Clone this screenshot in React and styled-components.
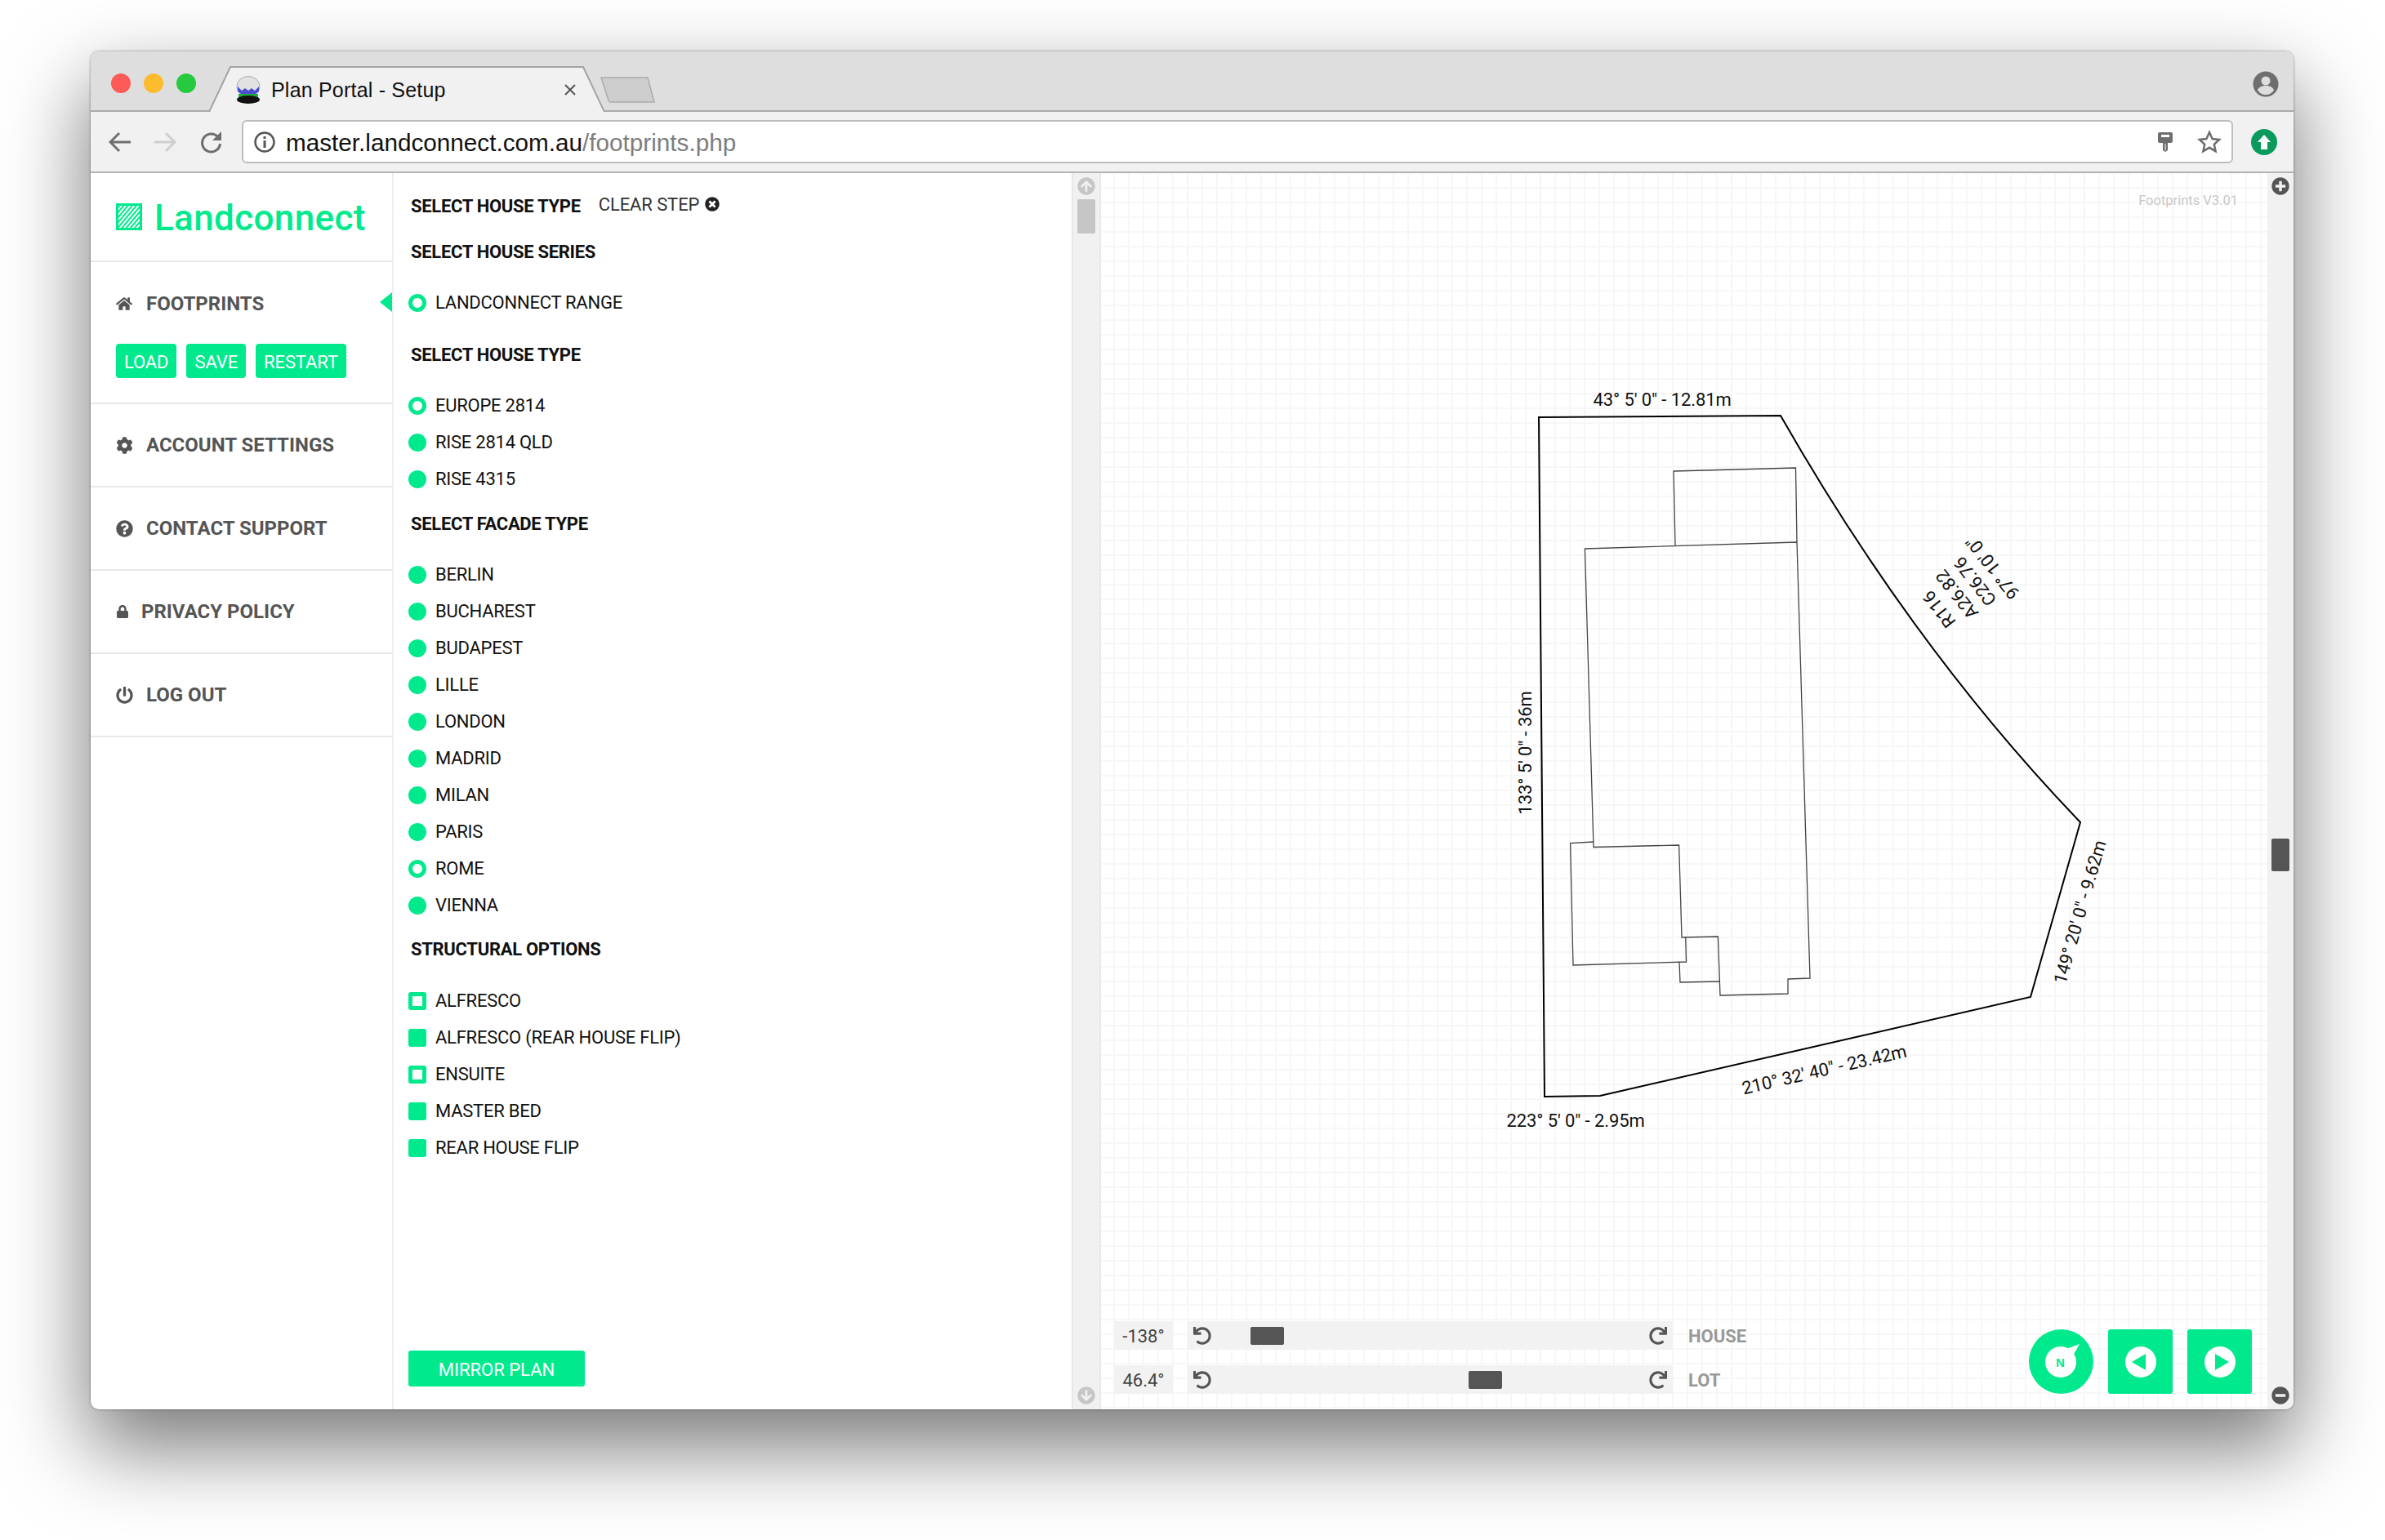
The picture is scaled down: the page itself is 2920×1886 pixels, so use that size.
import React from "react"
import styled, { createGlobalStyle } from "styled-components"
import {
  FaHome, FaCog, FaQuestionCircle, FaLock, FaPowerOff, FaTimesCircle,
  FaPlusCircle, FaMinusCircle, FaArrowCircleUp, FaArrowCircleDown, FaUndo, FaRedo,
} from "react-icons/fa"

const GREEN = "#00ea8d"
const NARROW = '"Liberation Sans Narrow", Roboto, sans-serif'

const Global = createGlobalStyle`
  html, body { margin: 0; padding: 0; background: #fff; }
  * { box-sizing: border-box; }
`

const Page = styled.div`
  width: 2920px;
  height: 1886px;
  padding: 63px 112px 160px 111px;
  background: #fff;
  overflow: hidden;
`

const Window = styled.div`
  width: 100%;
  height: 100%;
  display: flex;
  flex-direction: column;
  border-radius: 10px;
  background: #fff;
  overflow: hidden;
  box-shadow: 0 44px 100px 4px rgba(0, 0, 0, 0.52), 0 0 3px rgba(0, 0, 0, 0.45);
`

const TabStrip = styled.div`
  height: 74px;
  flex: none;
  display: flex;
  align-items: flex-end;
  padding: 0 18px 0 25px;
  background: #dedede;
  border-bottom: 2px solid #ababab;
`

const Lights = styled.div`
  display: flex;
  gap: 16px;
  align-self: flex-start;
  margin-top: 27px;
  margin-right: 16px;
`

const Light = styled.span`
  width: 24px;
  height: 24px;
  border-radius: 50%;
  background: ${p => p.$color};
`

const Tab = styled.div`
  position: relative;
  width: 484px;
  height: 56px;
  margin-bottom: -2px;
  display: flex;
  align-items: center;
  padding: 2px 34px 0 32px;
  font: 25px "Liberation Sans", Arial, sans-serif;
  letter-spacing: 0.2px;
  color: #111;

  > svg.shape { position: absolute; left: 0; top: 0; }
  > * { position: relative; }
`

const TabTitle = styled.span`
  margin-left: 12px;
  flex: 1;
  white-space: nowrap;
`

const NewTab = styled.svg`
  margin: 0 0 9px -6px;
  flex: none;
`

const Avatar = styled.svg`
  margin-left: auto;
  align-self: flex-start;
  margin-top: 24px;
`

const Toolbar = styled.div`
  height: 75px;
  flex: none;
  display: flex;
  align-items: center;
  padding: 0 20px 0 22px;
  background: #f1f1f1;
  border-bottom: 2px solid #b4b4b4;
`

const NavIcon = styled.svg`
  flex: none;
  margin-right: ${p => p.$gap}px;
`

const UrlBox = styled.div`
  flex: 1;
  height: 53px;
  display: flex;
  align-items: center;
  padding: 0 12px 0 13px;
  background: #fff;
  border: 2px solid #bdbdbd;
  border-radius: 6px;
  font: 29.7px "Liberation Sans", Arial, sans-serif;
  color: #111;
`

const UrlPath = styled.span`
  color: #7d7d7d;
`

const UrlText = styled.span`
  margin-left: 13px;
  padding-top: 2px;
  flex: 1;
  white-space: nowrap;
`

const UpdateBadge = styled.span`
  width: 32px;
  height: 32px;
  flex: none;
  margin-left: 22px;
  border-radius: 50%;
  background: #0a9a5c;
  display: flex;
  align-items: center;
  justify-content: center;
`

const Body = styled.div`
  flex: 1;
  min-height: 0;
  display: flex;
`

const Sidebar = styled.aside`
  width: 371px;
  flex: none;
  border-right: 2px solid #eeeeee;
  display: flex;
  flex-direction: column;
`

const Logo = styled.div`
  height: 109px;
  flex: none;
  padding: 37px 0 0 31px;
  display: flex;
  gap: 15px;
  border-bottom: 2px solid #e8e8e8;
  font: 500 44px/36px Roboto, sans-serif;
  letter-spacing: 0.35px;
  color: ${GREEN};
`

const NavBlock = styled.div`
  position: relative;
  height: ${p => p.$h}px;
  flex: none;
  padding: ${p => p.$top}px 0 0 31px;
  border-bottom: 2px solid #e8e8e8;
`

const NavLink = styled.div`
  height: 30px;
  display: flex;
  align-items: center;
  gap: ${p => p.$gap}px;
  font: bold 24px ${NARROW};
  color: #555;
  white-space: nowrap;
`

const ActiveMark = styled.span`
  position: absolute;
  right: 0;
  top: 37px;
  width: 0;
  height: 0;
  border-style: solid;
  border-width: 12px 15px 12px 0;
  border-color: transparent ${GREEN} transparent transparent;
`

const ActionRow = styled.div`
  display: flex;
  gap: 12px;
  margin-top: 34px;
`

const ActionButton = styled.div`
  height: 42px;
  padding: 2px 10px 0;
  display: flex;
  align-items: center;
  background: ${GREEN};
  border-radius: 4px;
  color: #fff;
  font: 22px ${NARROW};
  letter-spacing: -0.1px;
`

const Steps = styled.section`
  width: 830px;
  flex: none;
  display: flex;
  flex-direction: column;
  padding: 22px 0 28px 18px;
`

const StepHeader = styled.div`
  height: 36px;
  display: flex;
  align-items: center;
  flex: none;
`

const Heading = styled.h3`
  height: 36px;
  margin: ${p => p.$top}px 0 ${p => p.$bottom}px 3px;
  flex: none;
  display: flex;
  align-items: center;
  font: bold 22px ${NARROW};
  letter-spacing: -0.3px;
  color: #111;
`

const ClearStep = styled.span`
  margin: 0 7px 3px 22px;
  font: 22px ${NARROW};
  letter-spacing: -0.1px;
  color: #333;
`

const ClearIcon = styled(FaTimesCircle)`
  margin-bottom: 4px;
  color: #222;
  font-size: 18px;
`

const Option = styled.div`
  height: 45px;
  flex: none;
  display: flex;
  align-items: center;
  gap: 11px;
  font: 22px ${NARROW};
  letter-spacing: -0.25px;
  color: #111;
`

const Marker = styled.span`
  width: 22px;
  height: 22px;
  flex: none;
  border-radius: ${p => (p.$square ? "3px" : "50%")};
  background: ${p => (p.$open ? "#fff" : GREEN)};
  border: ${p => (p.$open ? `5px solid ${GREEN}` : "none")};
`

const MirrorButton = styled.div`
  width: 216px;
  height: 44px;
  padding-top: 2px;
  margin-top: auto;
  flex: none;
  display: flex;
  align-items: center;
  justify-content: center;
  background: ${GREEN};
  border-radius: 3px;
  color: #fff;
  font: 22px ${NARROW};
`

const Scrollbar = styled.div`
  position: relative;
  width: ${p => p.$w}px;
  flex: none;
  display: flex;
  flex-direction: column;
  align-items: center;
  padding: 5px 0 6px;
  background: #f1f1f1;
  border-left: ${p => (p.$bordered ? "2px solid #e8e8e8" : "none")};
  border-right: ${p => (p.$bordered ? "2px solid #e8e8e8" : "none")};
  font-size: 22px;
  color: ${p => p.$color};
`

const ScrollThumb = styled.span`
  position: absolute;
  left: 50%;
  top: ${p => p.$top}px;
  width: 22px;
  height: ${p => p.$h}px;
  margin-left: -11px;
  border-radius: 2px;
  background: ${p => p.$color};
`

const ScrollEnd = styled.span`
  margin-top: auto;
  display: flex;
`

const Canvas = styled.main`
  position: relative;
  flex: 1;
  min-width: 0;
  display: flex;
  flex-direction: column;
  justify-content: flex-end;
  background-color: #fff;
  background-image:
    linear-gradient(to right, #f7f7f7 2px, transparent 2px),
    linear-gradient(to bottom, #f7f7f7 2px, transparent 2px);
  background-size: 18px 18px;
  background-position: 15px 17px;
`

const Plan = styled.svg`
  position: absolute;
  left: 0;
  top: 0;

  text {
    font: 22px ${NARROW};
    letter-spacing: -0.1px;
    fill: #111;
    text-anchor: middle;
    dominant-baseline: central;
  }
`

const Version = styled.span`
  position: absolute;
  right: 36px;
  top: 24px;
  font: 16.5px ${NARROW};
  color: #c8c8c8;
`

const ControlBar = styled.div`
  position: relative;
  display: flex;
  align-items: flex-end;
  padding: 0 19px 19px 16px;
`

const Sliders = styled.div`
  display: flex;
  flex-direction: column;
  gap: 19px;
`

const SliderRow = styled.div`
  display: flex;
  align-items: center;
`

const Value = styled.span`
  width: 72px;
  height: 35px;
  padding-top: 2px;
  display: flex;
  align-items: center;
  justify-content: center;
  background: #f2f2f2;
  font: 22px ${NARROW};
  color: #444;
`

const Track = styled.div`
  position: relative;
  width: 594px;
  height: 35px;
  margin: 0 19px 0 18px;
  padding: 0 7px;
  display: flex;
  align-items: center;
  justify-content: space-between;
  background: #f2f2f2;
  color: #555;
  font-size: 22px;
`

const Thumb = styled.span`
  position: absolute;
  top: 7px;
  width: 41px;
  height: 22px;
  border-radius: 2px;
  background: #555;
`

const SliderLabel = styled.span`
  padding-top: 2px;
  font: bold 22px ${NARROW};
  color: #999;
`

const Controls = styled.div`
  margin-left: auto;
  display: flex;
  gap: 18px;
`

const RoundButton = styled.div`
  width: 79px;
  height: 79px;
  background: ${GREEN};
  border-radius: ${p => (p.$round ? "50%" : "3px")};
  display: flex;
  align-items: center;
  justify-content: center;
`

const Favicon = () => (
  <svg width="32" height="34" viewBox="0 0 32 34">
    <ellipse cx="16" cy="13" rx="14" ry="12.500" fill="#e2e2e2" stroke="#a8a8a8" />
    <path d="M3 13l5 5 4-3 4 3 4-3 4 3 5-5v6l-4 3H7l-4-3z" fill="#4a4fd0" />
    <path d="M4 22h24v5H4z" fill="#1fae3a" />
    <ellipse cx="16" cy="29" rx="14" ry="5" fill="#111" />
  </svg>
)

const ModeTriangle = ({ flip }) => (
  <svg width="38" height="38" viewBox="0 0 38 38">
    <circle cx="19" cy="19" r="19" fill="#fff" />
    <path d={flip ? "M25 9v20L8 19z" : "M13 9v20l17-10z"} fill={GREEN} />
  </svg>
)

const options = (names, open = []) =>
  names.map(name => ({ name, open: open.includes(name) }))

const houseTypes = options(["EUROPE 2814", "RISE 2814 QLD", "RISE 4315"], ["EUROPE 2814"])
const facades = options(
  ["BERLIN", "BUCHAREST", "BUDAPEST", "LILLE", "LONDON", "MADRID", "MILAN", "PARIS", "ROME", "VIENNA"],
  ["ROME"],
)
const structural = options(
  ["ALFRESCO", "ALFRESCO (REAR HOUSE FLIP)", "ENSUITE", "MASTER BED", "REAR HOUSE FLIP"],
  ["ALFRESCO", "ENSUITE"],
)

const OptionList = ({ items, square }) =>
  items.map(item => (
    <Option key={item.name}>
      <Marker $open={item.open} $square={square} />
      {item.name}
    </Option>
  ))

const Slider = ({ value, label, thumb }) => (
  <SliderRow>
    <Value>{value}</Value>
    <Track>
      <FaUndo />
      <Thumb style={{ left: thumb }} />
      <FaRedo />
    </Track>
    <SliderLabel>{label}</SliderLabel>
  </SliderRow>
)

export default function App() {
  return (
    <Page>
      <Global />
      <Window>
        <TabStrip>
          <Lights>
            <Light $color="#fc5b57" />
            <Light $color="#fdbc2e" />
            <Light $color="#27c93f" />
          </Lights>
          <Tab>
            <svg className="shape" width="484" height="56" viewBox="0 0 484 56">
              <path d="M0 56L26 1H458L484 56" fill="#f1f1f1" stroke="#a3a3a3" strokeWidth="2" />
            </svg>
            <Favicon />
            <TabTitle>Plan Portal - Setup</TabTitle>
            <svg width="16" height="16" viewBox="0 0 16 16">
              <path d="M2 2l12 12M14 2L2 14" stroke="#555" strokeWidth="2" />
            </svg>
          </Tab>
          <NewTab width="68" height="32" viewBox="0 0 68 32">
            <path d="M2 1h48l9 0 8 30H14a3 3 0 0 1-3-2L2 1z" fill="#cdcdcd" stroke="#ababab" strokeWidth="1.5" />
          </NewTab>
          <Avatar width="32" height="32" viewBox="0 0 32 32">
            <circle cx="16" cy="16" r="15.5" fill="#6e6e6e" />
            <circle cx="16" cy="12" r="5.5" fill="#dedede" />
            <path d="M6 23c2-4 6-5 10-5s8 1 10 5c-2 4-6 6-10 6s-8-2-10-6z" fill="#dedede" />
          </Avatar>
        </TabStrip>
        <Toolbar>
          <NavIcon $gap={29} width="27" height="26" viewBox="0 0 27 26">
            <path d="M27 13H3M13 2L2 13l11 11" fill="none" stroke="#6e6e6e" strokeWidth="3" />
          </NavIcon>
          <NavIcon $gap={29} width="27" height="26" viewBox="0 0 27 26">
            <path d="M0 13h24M14 2l11 11-11 11" fill="none" stroke="#cfcfcf" strokeWidth="3" />
          </NavIcon>
          <NavIcon $gap={24} width="27" height="30" viewBox="0 0 27 30">
            <path d="M22 9a11 11 0 1 0 2.5 8" fill="none" stroke="#6e6e6e" strokeWidth="3" />
            <path d="M26 2v11H15z" fill="#6e6e6e" />
          </NavIcon>
          <UrlBox>
            <svg width="26" height="26" viewBox="0 0 26 26">
              <circle cx="13" cy="13" r="11.5" fill="none" stroke="#555" strokeWidth="2.5" />
              <path d="M11.5 6h3v3h-3zM11.5 11h3v9h-3z" fill="#555" />
            </svg>
            <UrlText>
              master.landconnect.com.au<UrlPath>/footprints.php</UrlPath>
            </UrlText>
            <NavIcon $gap={30} width="18" height="24" viewBox="0 0 18 24">
              <path d="M2 0h14a2 2 0 0 1 2 2v9a2 2 0 0 1-2 2h-4v9l-3 2-3-2v-9H2a2 2 0 0 1-2-2V2a2 2 0 0 1 2-2z" fill="#6e6e6e" />
              <path d="M4 3h10v3H4z" fill="#fff" />
              <path d="M8.5 14h1v8h-1z" fill="#fff" />
            </NavIcon>
            <svg width="30" height="29" viewBox="0 0 30 29">
              <path d="M15 3l3.6 8 8.6.9-6.4 5.8 1.8 8.5L15 21.8 7.4 26.200l1.800-8.500-6.400-5.800 8.600-.9z" fill="none" stroke="#6e6e6e" strokeWidth="2.500" />
            </svg>
          </UrlBox>
          <UpdateBadge>
            <svg width="16" height="18" viewBox="0 0 16 18">
              <path d="M8 0l8 9h-4v9H4V9H0z" fill="#fff" />
            </svg>
          </UpdateBadge>
        </Toolbar>
        <Body>
          <Sidebar>
            <Logo>
              <svg width="32" height="33" viewBox="0 0 32 33">
                <defs>
                  <pattern id="hatch" width="4" height="4" patternUnits="userSpaceOnUse" patternTransform="rotate(40)">
                    <rect width="4" height="4" fill="#fff" />
                    <rect width="2" height="4" fill={GREEN} />
                  </pattern>
                </defs>
                <rect x="1.500" y="1.500" width="29" height="30" fill="url(#hatch)" stroke={GREEN} strokeWidth="3" />
              </svg>
              Landconnect
            </Logo>
            <NavBlock $h={174} $top={36}>
              <NavLink $gap={17}><FaHome size={20} />FOOTPRINTS</NavLink>
              <ActiveMark />
              <ActionRow>
                <ActionButton>LOAD</ActionButton>
                <ActionButton>SAVE</ActionButton>
                <ActionButton>RESTART</ActionButton>
              </ActionRow>
            </NavBlock>
            <NavBlock $h={102} $top={35}>
              <NavLink $gap={16}><FaCog size={21} />ACCOUNT SETTINGS</NavLink>
            </NavBlock>
            <NavBlock $h={102} $top={35}>
              <NavLink $gap={16}><FaQuestionCircle size={21} />CONTACT SUPPORT</NavLink>
            </NavBlock>
            <NavBlock $h={102} $top={35}>
              <NavLink $gap={15}><FaLock size={16} />PRIVACY POLICY</NavLink>
            </NavBlock>
            <NavBlock $h={102} $top={35}>
              <NavLink $gap={16}><FaPowerOff size={21} />LOG OUT</NavLink>
            </NavBlock>
          </Sidebar>
          <Steps>
            <StepHeader>
              <Heading $top={0} $bottom={0} as="span">SELECT HOUSE TYPE</Heading>
              <ClearStep>CLEAR STEP</ClearStep>
              <ClearIcon />
            </StepHeader>
            <Heading $top={20} $bottom={22}>SELECT HOUSE SERIES</Heading>
            <OptionList items={options(["LANDCONNECT RANGE"], ["LANDCONNECT RANGE"])} />
            <Heading $top={23} $bottom={22}>SELECT HOUSE TYPE</Heading>
            <OptionList items={houseTypes} />
            <Heading $top={14} $bottom={22}>SELECT FACADE TYPE</Heading>
            <OptionList items={facades} />
            <Heading $top={13} $bottom={23}>STRUCTURAL OPTIONS</Heading>
            <OptionList items={structural} square />
            <MirrorButton>MIRROR PLAN</MirrorButton>
          </Steps>
          <Scrollbar $w={36} $bordered $color="#c6c6c6">
            <FaArrowCircleUp />
            <ScrollThumb $top={32} $h={42} $color="#c6c6c6" />
            <ScrollEnd><FaArrowCircleDown /></ScrollEnd>
          </Scrollbar>
          <Canvas>
            <Plan width="1428" height="1514" viewBox="1348 212 1428 1514">
              <g fill="none" stroke="#444" strokeWidth="1.300">
                <path d="M2051 668L2049 577L2198.500 573L2200 664" />
                <path d="M1940.400 672L2200 664L2216 1198L2189 1199L2189 1217L2106 1219L2103.400 1147L2059 1148L2055.600 1035L1951 1037.500Z" />
                <path d="M1951 1031L1922.600 1032.500L1926 1182L2064.500 1178L2063.700 1147" />
                <path d="M2056 1178L2057 1203L2105.600 1202" />
              </g>
              <path
                d="M1884 511L2180 509Q2342.500 794 2547 1007L2486 1221L1959 1342L1891 1343Z"
                fill="none"
                stroke="#000"
                strokeWidth="2"
              />
              <text x="2035" y="489">43° 5' 0" - 12.81m</text>
              <text transform="translate(1867 922) rotate(-90)">133° 5' 0" - 36m</text>
              <text transform="translate(2374 746) rotate(232)">R116</text>
              <text transform="translate(2396 728) rotate(232)">A26.82</text>
              <text transform="translate(2418 712) rotate(232)">C26.76</text>
              <text transform="translate(2440 695) rotate(232)">97° 10' 0"</text>
              <text transform="translate(2233.500 1310) rotate(-13)">210° 32' 40" - 23.42m</text>
              <text x="1929" y="1372">223° 5' 0" - 2.95m</text>
              <text transform="translate(2546.500 1117) rotate(-74)">149° 20' 0" - 9.62m</text>
            </Plan>
            <Version>Footprints V3.01</Version>
            <ControlBar>
              <Sliders>
                <Slider value="-138°" label="HOUSE" thumb={77} />
                <Slider value="46.4°" label="LOT" thumb={344} />
              </Sliders>
              <Controls>
                <RoundButton $round>
                  <svg width="79" height="79" viewBox="0 0 79 79">
                    <circle cx="39" cy="40" r="19" fill="#fff" />
                    <path d="M46 24L62 18L53 34z" fill="#fff" />
                    <text x="38.500" y="46" textAnchor="middle" fontFamily="Liberation Sans, sans-serif" fontWeight="bold" fontSize="15" fill={GREEN}>N</text>
                  </svg>
                </RoundButton>
                <RoundButton><ModeTriangle flip /></RoundButton>
                <RoundButton><ModeTriangle /></RoundButton>
              </Controls>
            </ControlBar>
          </Canvas>
          <Scrollbar $w={32} $color="#555">
            <FaPlusCircle />
            <ScrollThumb $top={815} $h={40} $color="#555" />
            <ScrollEnd><FaMinusCircle /></ScrollEnd>
          </Scrollbar>
        </Body>
      </Window>
    </Page>
  )
}
